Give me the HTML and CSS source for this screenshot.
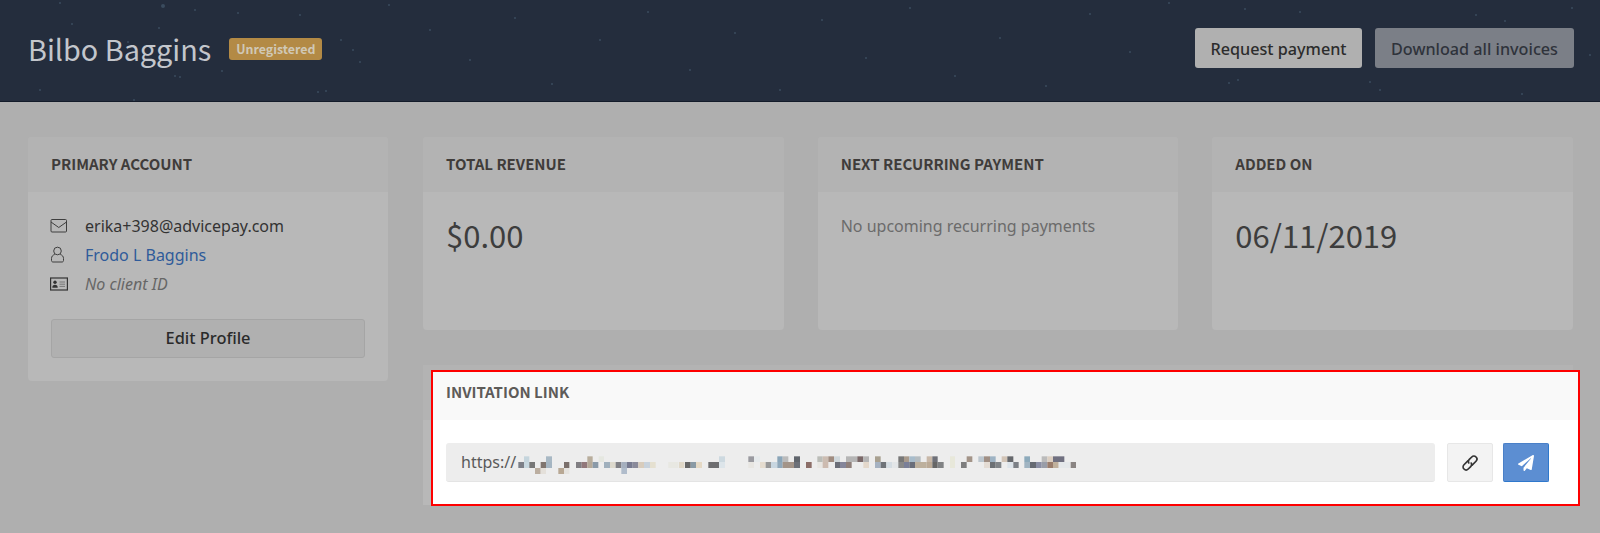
FILE: index.html
```html
<!DOCTYPE html>
<html lang="en">
<head>
<meta charset="utf-8">
<title>Bilbo Baggins</title>
<link rel="stylesheet" href="styles.css">
</head>
<body>
<header class="topbar">
  <svg class="stars" viewBox="0 0 1600 101" aria-hidden="true">
    <g fill="#3a4b5e">
      <circle cx="163" cy="6" r="2"/><circle cx="60" cy="3" r="1"/><circle cx="128" cy="42" r="1"/><circle cx="159" cy="28" r="1"/><circle cx="180" cy="77" r="1"/><circle cx="175" cy="76" r="1"/><circle cx="222" cy="71" r="1"/><circle cx="238" cy="13" r="1"/><circle cx="195" cy="10" r="1"/><circle cx="341" cy="40" r="1"/><circle cx="353" cy="50" r="1"/><circle cx="360" cy="62" r="1"/><circle cx="318" cy="92" r="1"/><circle cx="326" cy="91" r="1"/><circle cx="134" cy="100" r="1"/><circle cx="72" cy="24" r="1"/><circle cx="40" cy="90" r="1"/><circle cx="300" cy="15" r="1"/><circle cx="389" cy="5" r="1"/><circle cx="430" cy="30" r="1"/><circle cx="470" cy="60" r="1"/><circle cx="515" cy="18" r="1"/><circle cx="552" cy="84" r="1"/><circle cx="600" cy="40" r="1"/><circle cx="648" cy="12" r="1"/><circle cx="690" cy="70" r="1"/><circle cx="735" cy="33" r="1"/><circle cx="780" cy="90" r="1"/><circle cx="822" cy="20" r="1"/><circle cx="866" cy="58" r="1"/><circle cx="910" cy="8" r="1"/><circle cx="955" cy="76" r="1"/><circle cx="1000" cy="38" r="1"/><circle cx="1046" cy="86" r="1"/><circle cx="1090" cy="14" r="1"/><circle cx="1130" cy="52" r="1"/><circle cx="1169" cy="3" r="1"/><circle cx="1229" cy="83" r="1"/><circle cx="1238" cy="80" r="1"/><circle cx="1370" cy="82" r="1"/><circle cx="1380" cy="90" r="1"/><circle cx="1522" cy="94" r="1"/><circle cx="1476" cy="15" r="1"/><circle cx="1505" cy="21" r="1"/><circle cx="1590" cy="55" r="1"/><circle cx="1572" cy="8" r="1"/><circle cx="1245" cy="9" r="1"/><circle cx="1300" cy="12" r="1"/>
    </g>
  </svg>
  <div class="identity">
    <h1 class="client-name">Bilbo Baggins</h1>
    <span class="badge">Unregistered</span>
  </div>
  <div class="actions">
    <button class="btn btn-light">Request payment</button>
    <button class="btn btn-muted">Download all invoices</button>
  </div>
</header>

<main class="layout">
  <aside class="card account">
    <h2 class="card-title">PRIMARY ACCOUNT</h2>
    <div class="card-body account-body">
      <ul class="facts">
        <li class="fact">
          <svg class="fact-icon" viewBox="0 0 18 18" aria-hidden="true"><rect x="1" y="2.500" width="15.500" height="12.500" rx="1" fill="none" stroke="#3e3e3e" stroke-width="1"/><path d="M1 5l7.750 5.500L16.500 5" fill="none" stroke="#3e3e3e" stroke-width="1"/></svg>
          <span class="fact-text">erika+398@advicepay.com</span>
        </li>
        <li class="fact">
          <svg class="fact-icon" viewBox="0 0 18 18" aria-hidden="true"><circle cx="7.500" cy="5" r="3.800" fill="none" stroke="#3e3e3e" stroke-width="1"/><path d="M4.700 8.500C2.700 9 1.500 10.500 1.500 12.500v2c0 1 .7 1.500 1.500 1.500h9c.8 0 1.500-.5 1.500-1.500v-2c0-2-1.200-3.500-3.200-4" fill="none" stroke="#3e3e3e" stroke-width="1"/></svg>
          <a class="fact-link" href="#">Frodo L Baggins</a>
        </li>
        <li class="fact">
          <svg class="fact-icon" viewBox="0 0 18 18" aria-hidden="true"><rect x="0.600" y="3" width="16.800" height="12" fill="none" stroke="#333" stroke-width="1.200"/><circle cx="5" cy="7.300" r="1.700" fill="#333"/><path d="M2.300 12.800c0-2.200 1-3 2.700-3s2.700.8 2.700 3z" fill="#333"/><path d="M9.500 7h5.500M9.500 9.200h5.500M9.500 11.400h5.500" stroke="#777" stroke-width="1"/></svg>
          <span class="fact-note">No client ID</span>
        </li>
      </ul>
      <button class="btn btn-edit">Edit Profile</button>
    </div>
  </aside>

  <section class="content">
    <div class="stats">
      <article class="card stat">
        <h2 class="card-title">TOTAL REVENUE</h2>
        <div class="card-body"><p class="stat-value">$0.00</p></div>
      </article>
      <article class="card stat">
        <h2 class="card-title">NEXT RECURRING PAYMENT</h2>
        <div class="card-body"><p class="stat-note">No upcoming recurring payments</p></div>
      </article>
      <article class="card stat">
        <h2 class="card-title">ADDED ON</h2>
        <div class="card-body"><p class="stat-value">06/11/2019</p></div>
      </article>
    </div>

    <div class="invite-shade">
      <section class="invite">
        <h2 class="invite-title">INVITATION LINK</h2>
        <div class="invite-body">
          <div class="link-field">
            <span class="link-text">https://</span>
            <svg class="mosaic" viewBox="0 0 1728 90" aria-hidden="true">
              <g class="m-top">
                <rect x="72" y="25" width="16" height="17" fill="#c5d5dd"/><rect x="138" y="25" width="18" height="17" fill="#a8b8c4"/><rect x="262" y="25" width="16" height="17" fill="#b8ad9c"/><rect x="296" y="25" width="16" height="17" fill="#e5e7e0"/>
                <rect x="657" y="25" width="18" height="17" fill="#cdd9e0"/><rect x="745" y="25" width="17" height="17" fill="#9a9aa0"/><rect x="762" y="25" width="18" height="17" fill="#e6eaec"/><rect x="832" y="25" width="16" height="17" fill="#8aa5b8"/><rect x="848" y="25" width="17" height="17" fill="#bbbbbb"/><rect x="882" y="25" width="18" height="17" fill="#60656c"/><rect x="952" y="25" width="16" height="17" fill="#bbbdb8"/><rect x="968" y="25" width="17" height="17" fill="#ccbdb2"/><rect x="985" y="25" width="17" height="17" fill="#a08c80"/><rect x="1002" y="25" width="18" height="17" fill="#d0d8dc"/><rect x="1038" y="25" width="34" height="17" fill="#b5b5b5"/><rect x="1072" y="25" width="18" height="17" fill="#7a6868"/><rect x="1090" y="25" width="17" height="17" fill="#b5b5b5"/><rect x="1125" y="25" width="17" height="17" fill="#a8a090"/>
                <rect x="1195" y="25" width="17" height="17" fill="#777777"/><rect x="1212" y="25" width="16" height="17" fill="#a89a8c"/><rect x="1228" y="25" width="17" height="17" fill="#a8bccb"/><rect x="1245" y="25" width="17" height="17" fill="#b5bcc0"/><rect x="1280" y="25" width="17" height="17" fill="#c8b8a8"/><rect x="1297" y="25" width="16" height="17" fill="#6e7078"/><rect x="1350" y="25" width="15" height="17" fill="#e8e8da"/><rect x="1400" y="25" width="17" height="17" fill="#a39488"/><rect x="1435" y="25" width="17" height="17" fill="#bcc6ce"/><rect x="1452" y="25" width="18" height="17" fill="#a08f84"/><rect x="1470" y="25" width="17" height="17" fill="#9eb3c4"/><rect x="1505" y="25" width="17" height="17" fill="#d2c4b6"/><rect x="1522" y="25" width="18" height="17" fill="#66686c"/><rect x="1573" y="25" width="17" height="17" fill="#8daabb"/><rect x="1625" y="25" width="17" height="17" fill="#bbbbbb"/><rect x="1642" y="25" width="17" height="17" fill="#dccfc2"/><rect x="1659" y="25" width="34" height="17" fill="#707080"/>
              </g>
              <g class="m-mid">
                <rect x="55" y="42" width="17" height="18" fill="#7d8088"/><rect x="72" y="42" width="16" height="18" fill="#c8d8e0"/><rect x="88" y="42" width="17" height="18" fill="#777777"/><rect x="122" y="42" width="16" height="18" fill="#80756f"/><rect x="138" y="42" width="18" height="18" fill="#a5b5c2"/><rect x="192" y="42" width="16" height="18" fill="#7a6f6b"/><rect x="228" y="42" width="17" height="18" fill="#807e82"/><rect x="245" y="42" width="17" height="18" fill="#91777a"/><rect x="262" y="42" width="16" height="18" fill="#b5a998"/><rect x="278" y="42" width="17" height="18" fill="#8a9aa8"/><rect x="312" y="42" width="18" height="18" fill="#a0b0bd"/><rect x="330" y="42" width="17" height="18" fill="#dcd8cc"/><rect x="347" y="42" width="17" height="18" fill="#808085"/><rect x="364" y="42" width="17" height="18" fill="#a5afbe"/><rect x="381" y="42" width="17" height="18" fill="#777a90"/><rect x="398" y="42" width="17" height="18" fill="#8a8a9a"/><rect x="415" y="42" width="17" height="18" fill="#d8ccbc"/><rect x="432" y="42" width="18" height="18" fill="#c8d2dc"/><rect x="450" y="42" width="17" height="18" fill="#e5e0d0"/><rect x="505" y="42" width="30" height="18" fill="#e8e8e2"/><rect x="537" y="42" width="16" height="18" fill="#e0d8c8"/><rect x="555" y="42" width="17" height="18" fill="#666666"/><rect x="572" y="42" width="16" height="18" fill="#8a9aa5"/>
                <rect x="588" y="42" width="18" height="18" fill="#e5d9c5"/><rect x="625" y="42" width="32" height="18" fill="#6e6e70"/><rect x="657" y="42" width="18" height="18" fill="#dde5ea"/><rect x="745" y="42" width="17" height="18" fill="#e8e6e2"/><rect x="780" y="42" width="17" height="18" fill="#e5dccf"/><rect x="797" y="42" width="16" height="18" fill="#989898"/><rect x="813" y="42" width="19" height="18" fill="#c8d6e0"/><rect x="832" y="42" width="16" height="18" fill="#90a8ba"/><rect x="848" y="42" width="34" height="18" fill="#a39488"/><rect x="882" y="42" width="18" height="18" fill="#6c7078"/><rect x="918" y="42" width="17" height="18" fill="#8c6e68"/><rect x="952" y="42" width="16" height="18" fill="#e8e6e2"/><rect x="968" y="42" width="17" height="18" fill="#cdbbb0"/><rect x="1005" y="42" width="15" height="18" fill="#6b6e78"/><rect x="1020" y="42" width="18" height="18" fill="#84859a"/><rect x="1038" y="42" width="17" height="18" fill="#8f7f7a"/><rect x="1090" y="42" width="17" height="18" fill="#e4d8cb"/><rect x="1125" y="42" width="17" height="18" fill="#a5b2c2"/><rect x="1142" y="42" width="17" height="18" fill="#6f7378"/><rect x="1159" y="42" width="18" height="18" fill="#d5dde3"/><rect x="1177" y="42" width="18" height="18" fill="#e3e6e8"/><rect x="1195" y="42" width="17" height="18" fill="#888888"/>
                <rect x="1212" y="42" width="16" height="18" fill="#7a7f98"/><rect x="1228" y="42" width="17" height="18" fill="#6a6e7a"/><rect x="1245" y="42" width="35" height="18" fill="#bdb09d"/><rect x="1280" y="42" width="17" height="18" fill="#bbaa96"/><rect x="1297" y="42" width="16" height="18" fill="#666666"/><rect x="1313" y="42" width="18" height="18" fill="#808284"/><rect x="1350" y="42" width="15" height="18" fill="#e8e8da"/><rect x="1383" y="42" width="17" height="18" fill="#7e7e7e"/><rect x="1452" y="42" width="18" height="18" fill="#e4dcd4"/><rect x="1470" y="42" width="17" height="18" fill="#6c7074"/><rect x="1487" y="42" width="17" height="18" fill="#808488"/><rect x="1522" y="42" width="18" height="18" fill="#dde4ea"/><rect x="1540" y="42" width="16" height="18" fill="#7c8086"/><rect x="1573" y="42" width="17" height="18" fill="#a0b4c2"/><rect x="1590" y="42" width="18" height="18" fill="#666a72"/><rect x="1608" y="42" width="17" height="18" fill="#8a8ea4"/><rect x="1625" y="42" width="17" height="18" fill="#999da8"/><rect x="1642" y="42" width="17" height="18" fill="#9a7d6c"/><rect x="1659" y="42" width="17" height="18" fill="#c0b09c"/><rect x="1676" y="42" width="34" height="18" fill="#e5e8ea"/><rect x="1712" y="42" width="16" height="18" fill="#8a8482"/>
              </g>
              <g class="m-low">
                <rect x="105" y="60" width="17" height="18" fill="#bbaea0"/><rect x="122" y="60" width="16" height="18" fill="#e4e0da"/><rect x="175" y="60" width="17" height="18" fill="#b8a894"/><rect x="192" y="60" width="16" height="18" fill="#e5e3df"/><rect x="364" y="60" width="17" height="18" fill="#b0bccb"/>
              </g>
            </svg>
          </div>
          <button class="icon-btn icon-btn-plain" aria-label="Copy link">
            <svg class="link-icon" viewBox="0 0 18 18" aria-hidden="true"><g fill="none" stroke="#333" stroke-width="1.700" stroke-linecap="round" transform="rotate(-45 9 9)"><path d="M9 6H3.500a3 3 0 0 0 0 6H7a3 3 0 0 0 2.800-2"/><path d="M9 12h5.500a3 3 0 0 0 0-6H11a3 3 0 0 0-2.800 2"/></g></svg>
          </button>
          <button class="icon-btn icon-btn-send" aria-label="Send link">
            <svg class="send-icon" viewBox="0 0 512 512" aria-hidden="true"><path fill="#fff" d="M476 3.200L12.500 270.600c-18.100 10.400-15.800 35.600 2.200 43.200L121 358.400l287.300-253.200c5.500-4.900 13.300 2.600 8.600 8.300L176 407v80.500c0 23.600 28.500 32.900 42.500 15.800L282 426l124.600 52.200c14.200 6 30.400-2.900 33-18.200l72-432C515 7.800 493.300-6.800 476 3.200z"/></svg>
          </button>
        </div>
      </section>
    </div>
  </section>
</main>
</body>
</html>
```

FILE: styles.css
```css
* { box-sizing: border-box; }

html, body { margin: 0; }

body {
  height: 533px;
  overflow: hidden;
  background: #afafaf;
  color: #3a3a3a;
  font-family: "Noto Sans", "Open Sans", sans-serif;
  font-size: 16px;
}

.topbar {
  position: relative;
  height: 102px;
  padding: 28px 26px 0 28px;
  display: flex;
  justify-content: space-between;
  align-items: flex-start;
  background: #242d3d;
  border-bottom: 1px solid #141c2a;
}

.stars {
  position: absolute;
  left: 0;
  top: 0;
  width: 1600px;
  height: 101px;
}

.identity, .actions {
  position: relative;
  display: flex;
  align-items: center;
}

.identity { height: 40px; gap: 18px; }

.client-name {
  margin: 0;
  font-family: "Noto Sans CJK JP", "Noto Sans", sans-serif;
  font-size: 28.8px;
  font-weight: 400;
  color: #c3c6cc;
}

.badge {
  width: 93px;
  height: 22px;
  margin-top: 2px;
  display: flex;
  align-items: center;
  justify-content: center;
  background: #b38a45;
  border-radius: 3px;
  color: #d0c8b6;
  font-family: "Noto Sans CJK JP", "Noto Sans", sans-serif;
  font-size: 12.4px;
  font-weight: 700;
}

.actions { gap: 13px; }

.btn {
  font-family: inherit;
  font-size: 16.2px;
  font-weight: 500;
  border-radius: 3px;
  border: 0;
  height: 40px;
  padding: 1px 0 0;
}

.btn-light {
  width: 167px;
  background: #b0b0b0;
  color: #2c2c2c;
}

.btn-muted {
  width: 199px;
  background: #7b7f87;
  color: #2f333b;
}

.layout {
  padding: 35px 27px 0 28px;
  display: flex;
  align-items: flex-start;
  gap: 35px;
}

.card {
  background: #b8b8b8;
  border-radius: 4px;
  overflow: hidden;
}

.card-title {
  margin: 0;
  height: 55px;
  padding: 0 23px 2px;
  display: flex;
  align-items: center;
  background: #b3b3b3;
  color: #3f3c3a;
  font-family: "Noto Sans CJK JP", "Noto Sans", sans-serif;
  font-size: 15px;
  font-weight: 700;
}

.account { width: 360px; flex: none; height: 244px; }

.account-body { padding: 19px 23px 0 22px; }

.facts {
  list-style: none;
  margin: 0;
  padding: 0;
}

.fact {
  height: 29px;
  display: flex;
  align-items: center;
  gap: 17px;
}

.fact-icon { width: 18px; height: 18px; flex: none; }

.fact-text { color: #333; }

.fact-link { color: #2f5b9a; text-decoration: none; }

.fact-note { color: #666; font-style: italic; }

.btn-edit {
  display: block;
  width: 314px;
  height: 39px;
  margin: 21px 0 0 1px;
  padding: 0 0 2px;
  background: #b0b0b0;
  border: 1px solid #a5a5a5;
  color: #2a2a2a;
  font-size: 16.4px;
}

.content { flex: 1; min-width: 0; }

.stats {
  display: grid;
  grid-template-columns: repeat(3, 1fr);
  gap: 34px;
}

.stat { height: 193px; }

.stat-value {
  margin: 0;
  padding: 19px 23px 0;
  font-family: "Noto Sans CJK JP", "Noto Sans", sans-serif;
  font-size: 31px;
  font-weight: 400;
  line-height: 48px;
  color: #3d3d3d;
}

.stat-note {
  margin: 0;
  padding: 23px 23px 0;
  color: #6b6b6b;
  line-height: 22px;
}

.invite-shade {
  margin-top: 35px;
  height: 140px;
  padding: 5px 0 0 8px;
  background: linear-gradient(#b3b3b3 55px, #b8b8b8 55px);
}

.invite {
  margin-right: -7px;
  height: 136px;
  background: #fff;
  border: 2px solid #fe0000;
  overflow: hidden;
}

.invite-title {
  margin: 0;
  height: 48px;
  padding: 0 13px 9px;
  display: flex;
  align-items: center;
  background: #f9f9f9;
  color: #5e5b59;
  font-family: "Noto Sans CJK JP", "Noto Sans", sans-serif;
  font-size: 15px;
  font-weight: 700;
}

.invite-body {
  padding: 23px 0 0 13px;
  display: flex;
  gap: 12px;
}

.link-field {
  width: 989px;
  height: 39px;
  padding-left: 15px;
  display: flex;
  align-items: center;
  background: #ededed;
  border-bottom: 1px solid #e4e4e4;
  border-radius: 3px;
  color: #5a5a5a;
}

.link-text { flex: none; width: 54px; }

.mosaic {
  flex: none;
  width: 576px;
  height: 30px;
  margin-left: -15px;
  margin-top: 2px;
}

.icon-btn {
  width: 46px;
  height: 39px;
  padding: 0;
  display: flex;
  align-items: center;
  justify-content: center;
  border-radius: 2px;
}

.icon-btn-plain {
  background: #f3f3f3;
  border: 1px solid #e7e7e7;
}

.icon-btn-send {
  margin-left: -2px;
  background: #5c8ed2;
  border: 1px solid #4a80c8;
  border-bottom-color: #2f78cc;
  border-right-color: #2f78cc;
}

.link-icon { width: 18px; height: 18px; }

.send-icon { width: 16px; height: 16px; }
```
